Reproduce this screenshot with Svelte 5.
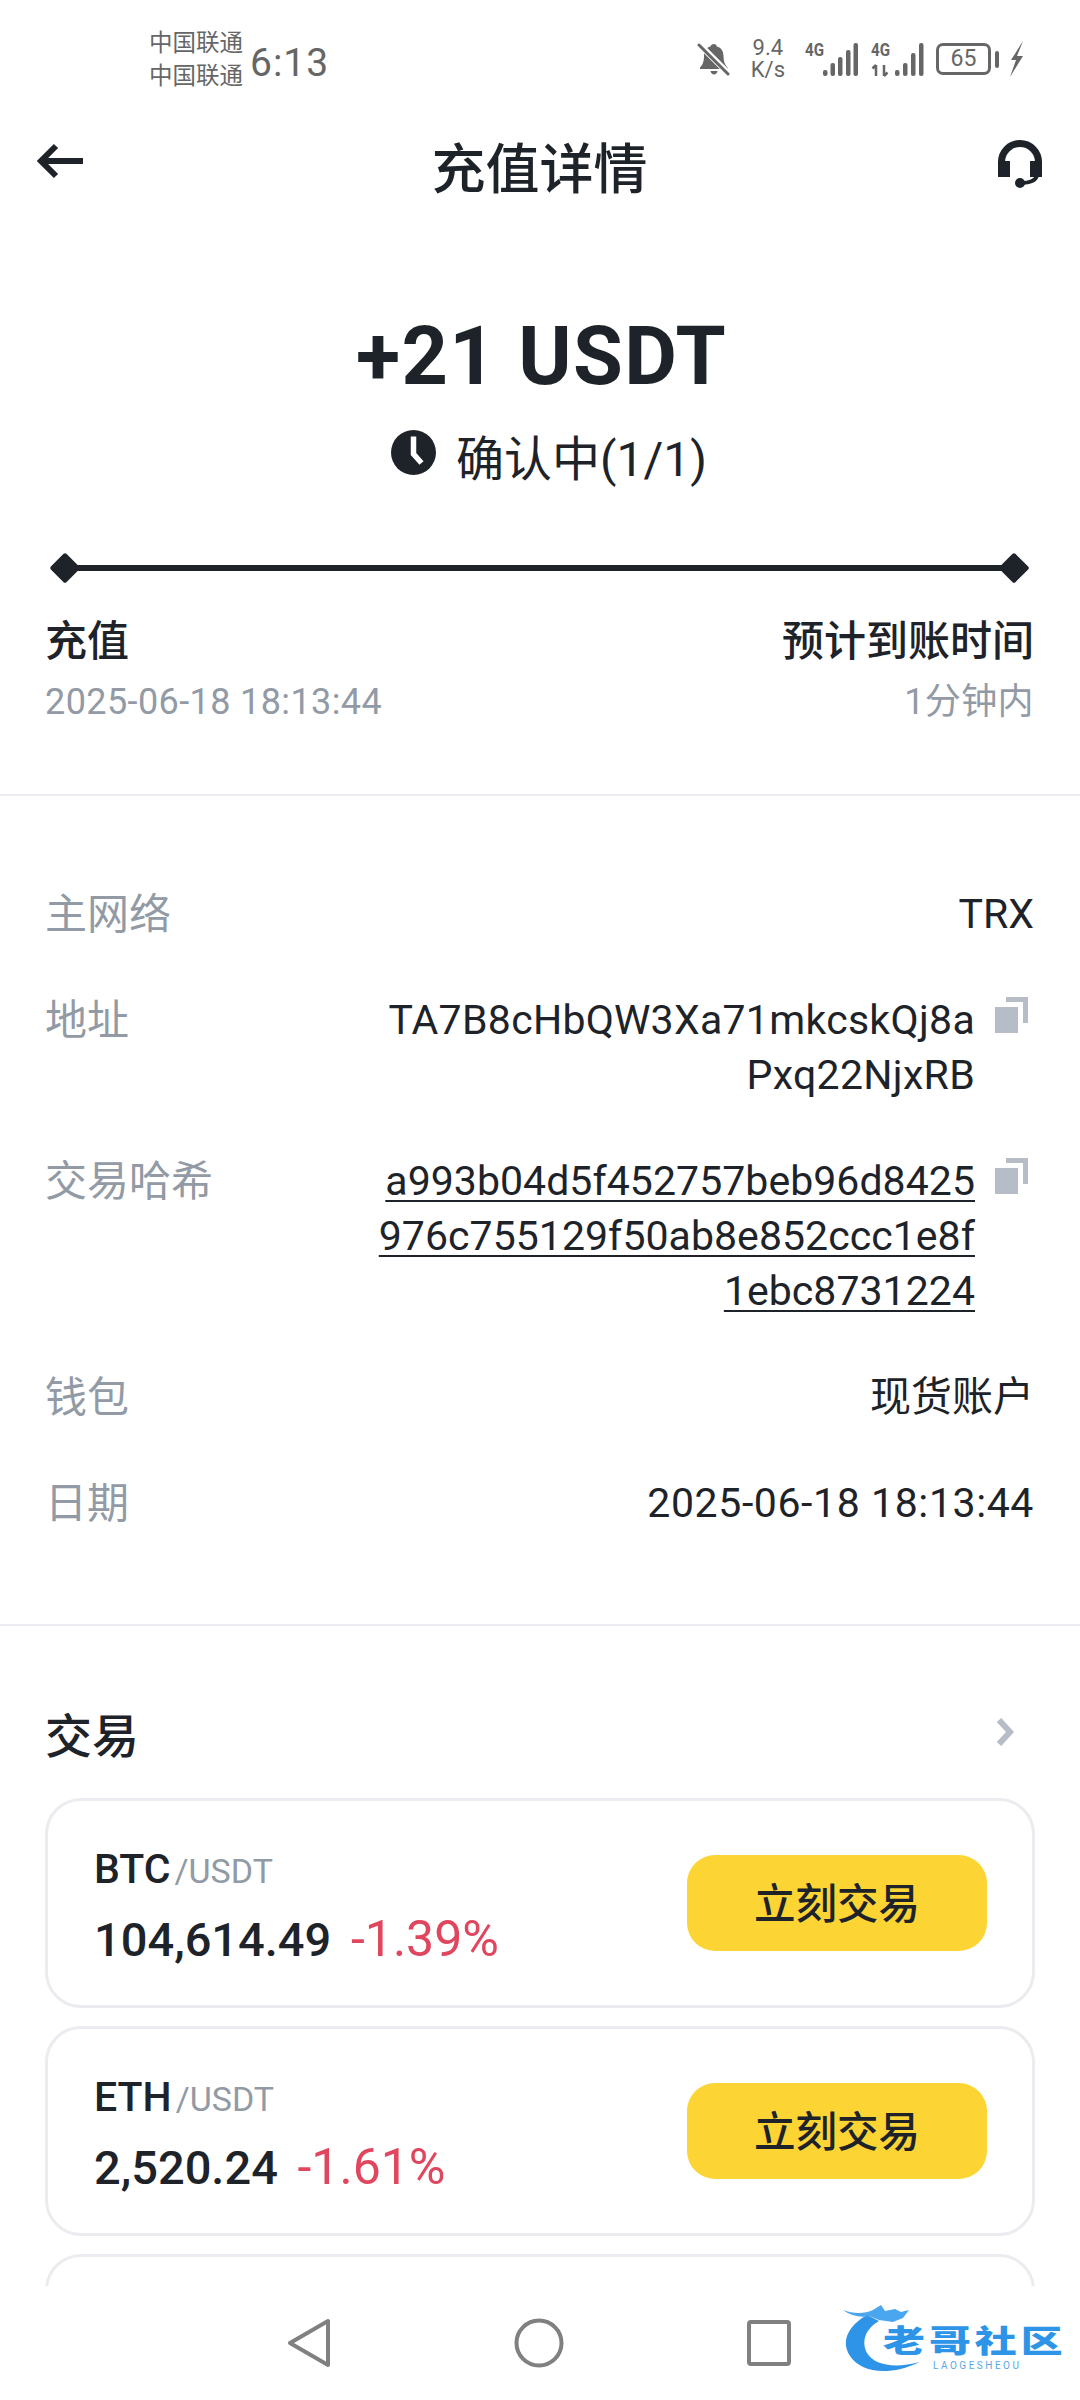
<script>
	const details = [
		{ label: '主网络', value: ['TRX'] },
		{ label: '地址', value: ['TA7B8cHbQW3Xa71mkcskQj8a', 'Pxq22NjxRB'], copy: true },
		{
			label: '交易哈希',
			value: ['a993b04d5f452757beb96d8425', '976c755129f50ab8e852ccc1e8f', '1ebc8731224'],
			copy: true,
			link: true
		},
		{ label: '钱包', value: ['现货账户'] },
		{ label: '日期', value: ['2025-06-18 18:13:44'], wide: true }
	];

	const pairs = [
		{ base: 'BTC', price: '104,614.49', change: '-1.39%' },
		{ base: 'ETH', price: '2,520.24', change: '-1.61%' }
	];
</script>

<div class="page">
	<div class="status">
		<div class="carriers">
			<span>中国联通</span>
			<span>中国联通</span>
		</div>
		<span class="time">6:13</span>
		<div class="status-right">
			<svg class="bell" width="34" height="34" viewBox="0 0 34 34">
				<path d="M17 2c1.600 0 2.600 1 2.800 2.400 4.600 1.200 6.700 5 6.700 9.600 0 5 1 8.600 4 11.500v1.500H3v-1.500c3-2.900 4-6.500 4-11.500 0-4.600 2.100-8.400 6.400-9.600C13.600 3 15.400 2 17 2z" fill="#666" />
				<path d="M13.500 29h7c-.4 2-1.800 3.500-3.500 3.500s-3.100-1.500-3.500-3.500z" fill="#666" />
				<path d="M2 2l30 30" stroke="#fff" stroke-width="6" />
				<path d="M2 3l29 29" stroke="#666" stroke-width="3" stroke-linecap="round" />
			</svg>
			<div class="speed">
				<span>9.4</span>
				<span>K/s</span>
			</div>
			<svg class="signal" width="54" height="44" viewBox="0 -4 54 44">
				<text x="0" y="15" class="net" textLength="19" lengthAdjust="spacingAndGlyphs">4G</text>
				<rect x="18" y="29" width="4.500" height="6" rx="2" />
				<rect x="25.500" y="22" width="4.500" height="13" rx="2" />
				<rect x="33" y="16" width="4.500" height="19" rx="2" />
				<rect x="41" y="9" width="4.500" height="26" rx="2" />
				<rect x="48.500" y="2" width="4.500" height="33" rx="2" />
			</svg>
			<svg class="signal last" width="54" height="44" viewBox="0 -4 54 44">
				<text x="0" y="15" class="net" textLength="19" lengthAdjust="spacingAndGlyphs">4G</text>
				<path d="M5 24v11M1.500 27.500L5 24M13 24v11M13 35l3.500-3.500" stroke="#666" stroke-width="2.500" fill="none" />
				<rect x="24" y="29" width="4.500" height="6" rx="2" />
				<rect x="32" y="22" width="4.500" height="13" rx="2" />
				<rect x="40" y="12" width="4.500" height="23" rx="2" />
				<rect x="48" y="2" width="4.500" height="33" rx="2" />
			</svg>
			<div class="battery">65</div>
			<span class="nub"></span>
			<svg class="bolt" width="15" height="36" viewBox="0 0 15 36">
				<path d="M14 0L2 19h5L1 36l13-21H8z" fill="#666" />
			</svg>
		</div>
	</div>

	<header class="topbar">
		<svg class="back" width="46" height="38" viewBox="0 0 46 38">
			<path d="M19 3L4 18l15 15M5 18h41" fill="none" stroke="#1e2329" stroke-width="6" />
		</svg>
		<h1>充值详情</h1>
		<svg width="48" height="52" viewBox="0 0 48 52">
			<path d="M5.500 26v-3a18.500 18.500 0 0 1 37 0v3" fill="none" stroke="#1e2329" stroke-width="7" />
			<rect x="2" y="22" width="12" height="16" fill="#1e2329" />
			<rect x="34" y="22" width="12" height="16" fill="#1e2329" />
			<path d="M41 36c-1 6-7 8-17 8" fill="none" stroke="#1e2329" stroke-width="4" />
			<circle cx="24" cy="44" r="5" fill="#1e2329" />
		</svg>
	</header>

	<section class="hero">
		<div class="amount">+21 USDT</div>
		<div class="state">
			<svg width="45" height="45" viewBox="0 0 45 45">
				<circle cx="22.500" cy="22.500" r="22.500" fill="#1e2329" />
				<path d="M22.500 6.500V24l8 9" fill="none" stroke="#fff" stroke-width="5.500" />
			</svg>
			<span>确认中(1/1)</span>
		</div>
	</section>

	<section class="progress">
		<div class="track">
			<i class="dot"></i>
			<i class="line"></i>
			<i class="dot"></i>
		</div>
		<div class="steps">
			<div>
				<div class="step-title">充值</div>
				<div class="step-sub">2025-06-18 18:13:44</div>
			</div>
			<div class="right">
				<div class="step-title">预计到账时间</div>
				<div class="step-sub">1分钟内</div>
			</div>
		</div>
	</section>

	<section class="details">
		{#each details as row}
			<div class="row">
				<span class="label">{row.label}</span>
				<div class="value" class:link={row.link} class:copyable={row.copy} class:wide={row.wide}>
					<div class="lines">
						{#each row.value as line}
							<div><span>{line}</span></div>
						{/each}
					</div>
					{#if row.copy}
						<svg class="copy" width="33" height="36" viewBox="0 0 33 36">
							<path d="M11 0h22v26h-5V5H11z" fill="#b7bdc6" />
							<rect x="0" y="10" width="23" height="26" fill="#b7bdc6" />
						</svg>
					{/if}
				</div>
			</div>
		{/each}
	</section>

	<section class="trade">
		<div class="trade-head">
			<h2>交易</h2>
			<svg width="20" height="30" viewBox="0 0 20 30">
				<path d="M4 3l11 12L4 27" fill="none" stroke="#b7bdc6" stroke-width="6" />
			</svg>
		</div>
		{#each pairs as pair}
			<div class="card">
				<div class="quote-box">
					<div class="pair">{pair.base}<small>/USDT</small></div>
					<div class="quote">
						<span class="price">{pair.price}</span>
						<span class="change">{pair.change}</span>
					</div>
				</div>
				<div class="btn">立刻交易</div>
			</div>
		{/each}
		<div class="card"></div>
	</section>

	<nav class="sysnav">
		<svg width="44" height="50" viewBox="0 0 44 50">
			<path d="M41 3v44L3 25z" fill="none" stroke="#808080" stroke-width="4" stroke-linejoin="round" />
		</svg>
		<svg width="50" height="50" viewBox="0 0 50 50">
			<circle cx="25" cy="25" r="22.500" fill="none" stroke="#808080" stroke-width="4" />
		</svg>
		<svg width="44" height="46" viewBox="0 0 44 46">
			<rect x="2" y="2" width="40" height="42" rx="2" fill="none" stroke="#808080" stroke-width="4" />
		</svg>
		<div class="logo">
			<svg width="120" height="70" viewBox="0 0 120 70">
				<path d="M24 10C6 20-3 36 7 51c10 15 36 22 70 6-26 7-46 3-53-9C18 37 22 24 36 16z" fill="#2d94e8" />
				<path d="M0 5c10 4 22 4 30 0l8-5 4 6 10-2 6 3 8-2-6 8-10 4-14-2-10-4C18 13 8 11 0 5z" fill="#4aa6ee" />
			</svg>
			<span class="logo-name">老哥社区</span>
			<span class="logo-en">LAOGESHEOU</span>
		</div>
	</nav>
</div>

<style>
	:global(body) {
		margin: 0;
		background: #fff;
	}

	.page {
		width: 1080px;
		height: 2400px;
		display: flex;
		flex-direction: column;
		overflow: hidden;
		position: relative;
		background: #fff;
		color: #1e2329;
		font-family: Roboto, 'Noto Sans CJK SC', sans-serif;
	}

	.status {
		height: 120px;
		flex: none;
		box-sizing: border-box;
		padding: 26px 56px 0 149px;
		display: flex;
		align-items: flex-start;
		color: #666;
	}
	.carriers {
		display: flex;
		flex-direction: column;
		padding-top: 1px;
		font-size: 23.500px;
		line-height: 33px;
		width: 101px;
	}
	.time {
		font-size: 39px;
		line-height: 74px;
		letter-spacing: 1px;
	}
	.status-right {
		margin-left: auto;
		height: 66px;
		display: flex;
		align-items: center;
	}
	.speed {
		display: flex;
		flex-direction: column;
		margin: 0 20px 0 20px;
		font-size: 22px;
		line-height: 22px;
		text-align: center;
	}
	.signal {
		margin-right: 12px;
	}
	.signal.last {
		margin-right: 8px;
	}
	.signal rect {
		fill: #666;
	}
	.net {
		font-size: 18px;
		font-weight: 700;
		fill: #666;
	}
	.battery {
		width: 55px;
		height: 32px;
		box-sizing: border-box;
		margin-left: 3px;
		border: 3px solid #666;
		border-radius: 7px;
		font-size: 23px;
		line-height: 26px;
		text-align: center;
	}
	.nub {
		width: 4px;
		height: 17px;
		margin: 0 10px 0 4px;
		background: #666;
		border-radius: 2px;
	}

	.topbar {
		height: 90px;
		flex: none;
		box-sizing: border-box;
		padding: 0 36px 0 37px;
		display: flex;
		align-items: center;
		justify-content: space-between;
	}
	.back {
		margin-bottom: 6px;
	}
	h1 {
		margin: 0;
		font-size: 54px;
		font-weight: 500;
	}

	.hero {
		height: 290px;
		flex: none;
		display: flex;
		flex-direction: column;
		align-items: center;
		box-sizing: border-box;
		padding-top: 97px;
	}
	.amount {
		font-size: 81px;
		line-height: 100px;
		font-weight: 700;
		letter-spacing: 1.300px;
		padding-left: 3px;
	}
	.state {
		display: flex;
		align-items: center;
		gap: 20px;
		height: 60px;
		margin-top: 18px;
		padding-left: 18px;
		font-size: 48px;
	}
	.state svg {
		margin-bottom: 6px;
	}

	.progress {
		flex: none;
		height: 296px;
		box-sizing: border-box;
		padding: 52px 46px 0 45px;
		border-bottom: 2px solid #eaecef;
	}
	.track {
		height: 32px;
		display: flex;
		align-items: center;
		padding: 0 9px 0 9px;
	}
	.dot {
		width: 22px;
		height: 22px;
		flex: none;
		background: #1e2329;
		transform: rotate(45deg);
		border-radius: 2px;
	}
	.line {
		flex: 1;
		height: 6px;
		background: #1e2329;
	}
	.steps {
		display: flex;
		justify-content: space-between;
		margin-top: 28px;
	}
	.right {
		text-align: right;
	}
	.step-title {
		font-size: 42px;
		line-height: 60px;
		font-weight: 500;
	}
	.step-sub {
		font-size: 36px;
		line-height: 60px;
		letter-spacing: 0.4px;
		color: #929aa5;
	}

	.details {
		flex: none;
		height: 830px;
		box-sizing: border-box;
		padding: 91px 46px 0 45px;
		border-bottom: 2px solid #eaecef;
		display: flex;
		flex-direction: column;
		gap: 51px;
	}
	.row {
		display: flex;
		justify-content: space-between;
		font-size: 42px;
		line-height: 55px;
	}
	.label {
		color: #929aa5;
	}
	.value {
		display: flex;
		text-align: right;
		font-size: 41px;
	}
	.value.copyable {
		letter-spacing: 0.3px;
	}
	.value.wide {
		letter-spacing: 0.6px;
	}
	.value.link {
		letter-spacing: 0.05px;
	}
	.link .lines span {
		text-decoration: underline;
		text-decoration-thickness: 2px;
		text-underline-offset: 5px;
	}
	.copy {
		margin: 4px 6px 0 20px;
	}

	.trade {
		flex: 1;
		min-height: 0;
		overflow: hidden;
		box-sizing: border-box;
		padding: 0 45px;
	}
	.trade-head {
		height: 172px;
		box-sizing: border-box;
		padding: 40px 20px 0 0;
		display: flex;
		align-items: center;
		justify-content: space-between;
	}
	h2 {
		margin: 0;
		font-size: 47px;
		font-weight: 500;
	}
	.card {
		height: 210px;
		box-sizing: border-box;
		margin-bottom: 18px;
		padding: 0 45px 0 46px;
		display: flex;
		align-items: center;
		justify-content: space-between;
		border: 3px solid #eaecef;
		border-radius: 36px;
	}
	.quote-box {
		padding-top: 3px;
	}
	.pair {
		font-size: 41px;
		line-height: 60px;
		font-weight: 500;
	}
	.pair small {
		margin-left: 4px;
		font-size: 34px;
		font-weight: 400;
		color: #929aa5;
	}
	.quote {
		margin-top: 8px;
		font-size: 47px;
		line-height: 60px;
		font-weight: 500;
	}
	.change {
		margin-left: 8px;
		font-size: 50px;
		color: #e0475f;
		font-weight: 400;
	}
	.btn {
		width: 300px;
		height: 96px;
		box-sizing: border-box;
		padding-bottom: 5px;
		border-radius: 28px;
		background: #fcd535;
		display: flex;
		align-items: center;
		justify-content: center;
		font-size: 41.500px;
		font-weight: 500;
	}

	.sysnav {
		flex: none;
		height: 114px;
		position: relative;
		display: flex;
		align-items: center;
		box-sizing: border-box;
		padding: 0 289px 0 287px;
		justify-content: space-between;
		background: #fff;
	}
	.logo {
		position: absolute;
		left: 843px;
		top: 19px;
		width: 225px;
		height: 70px;
	}
	.logo svg {
		position: absolute;
		left: 0;
		top: 0;
	}
	.logo-name {
		position: absolute;
		left: 40px;
		top: 21px;
		font-size: 31px;
		line-height: 32px;
		font-weight: 900;
		letter-spacing: 3px;
		color: #2d94e8;
		white-space: nowrap;
		transform: scaleX(1.35);
		transform-origin: left center;
	}
	.logo-en {
		position: absolute;
		left: 90px;
		top: 55px;
		font-size: 10px;
		line-height: 12px;
		letter-spacing: 2.500px;
		color: #5aa8e6;
	}
</style>
